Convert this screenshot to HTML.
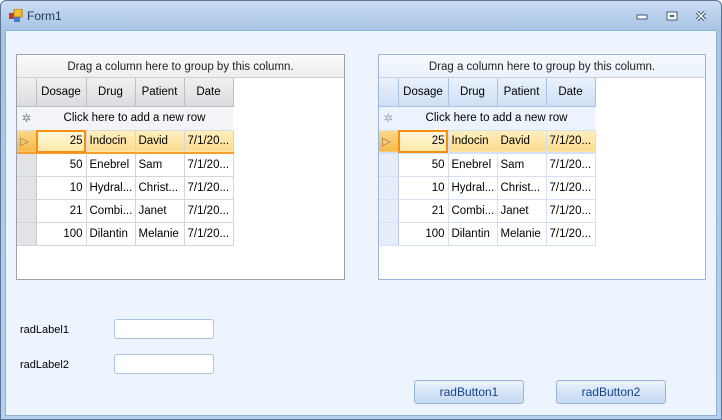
<!DOCTYPE html>
<html><head><style>
*{box-sizing:border-box;margin:0;padding:0}
body{width:722px;height:420px;overflow:hidden;font-family:"Liberation Sans",sans-serif;font-size:11.5px;color:#000;background:#fff}
.win{position:absolute;left:0;top:0;width:722px;height:420px;background:linear-gradient(#c9dcf2,#a8c3e4 30px,#b9d0ec);border:1px solid #5a7497;border-radius:6px 6px 0 0}
.title{position:absolute;left:26px;top:8px;color:#1e395b;font-size:12px}
.client{position:absolute;left:4px;top:29px;width:712px;height:386px;background:#edf4fd;border:1px solid #8fafd6}
.grid{position:absolute;top:54px;height:226px;background:#fff;border:1px solid #a0a0a8}
.grp{height:23px;text-align:center;line-height:24px;background:linear-gradient(#fafafa,#eeeeef);border-bottom:1px solid #d0d0d4;color:#222}
table{border-collapse:collapse;table-layout:fixed;width:216px}
td{border:1px solid #d5d5d8;height:23px;padding:0 3px;white-space:nowrap;overflow:hidden;border-top:none;border-left:none}
.hd td{height:28px;text-align:center;background:linear-gradient(#f0f0f2,#dcdce0);border-right:1px solid #c0c0c4;border-bottom:1px solid #c0c0c4}
.nr td{height:24px;background:#f3f4f8;text-align:center;border-right:none;border-bottom:1px solid #d8dae0}
.ind{background:#e2e3e7;border-right:1px solid #c8c8cc}
.sel td{background:linear-gradient(#ffefc0,#fcdc8e);border-bottom:2px solid #f7a030}
.sel td.cur{background:linear-gradient(#fff8e0,#ffe8a8);outline:2px solid #f78f10;outline-offset:-2px}
.r{text-align:right}
.b .hd td{background:linear-gradient(#eaf2fc,#cfdff3);border-color:#a9c3e3}
.b td{border-color:#d4e1f2}
.b .ind{background:#e6eef9;border-right-color:#b6cbe6}
.b .nr td{background:#ecf3fd}
.b .grp{background:linear-gradient(#f6f9fd,#eaf2fc)}
.b{border-color:#99b6da}
.lbl{position:absolute;left:20px;font-size:11px}
.tb{position:absolute;left:114px;width:100px;height:20px;background:#fff;border:1px solid #a9c3e3;border-radius:3px}
.btn{position:absolute;top:380px;width:110px;height:24px;border:1px solid #98b4d8;border-radius:3px;background:linear-gradient(#ecf3fc,#d6e5f7 50%,#c6daf3);text-align:center;line-height:22px;color:#15428b;font-size:12px}
</style></head><body>
<div class="win">
<svg style="position:absolute;left:8px;top:8px" width="14" height="14"><rect x="0" y="4" width="6" height="6" fill="#c03a2a"/><rect x="5" y="0" width="8" height="8" fill="#f5c030" stroke="#b08010"/><rect x="5" y="8" width="6" height="5" fill="#4a7ad0"/></svg>
<div class="title">Form1</div>
<svg style="position:absolute;left:634px;top:10px" width="80" height="12"><rect x="2" y="4" width="10" height="4" fill="#fff" stroke="#3b5a82"/><rect x="32" y="1" width="10" height="8" fill="#fff" stroke="#3b5a82"/><rect x="35" y="4" width="4" height="2" fill="#3b5a82"/><path d="M62 1l8 8M70 1l-8 8" stroke="#3b5a82" stroke-width="3.5"/><path d="M62 1l8 8M70 1l-8 8" stroke="#fff" stroke-width="1.5"/></svg>
<div class="client"></div>
</div>

<div class="grid" style="left:16px;width:329px">
<div class="grp">Drag a column here to group by this column.</div>
<table>
<colgroup><col style="width:19px"><col style="width:50px"><col style="width:49px"><col style="width:49px"><col style="width:49px"></colgroup>
<tr class="hd"><td></td><td>Dosage</td><td>Drug</td><td>Patient</td><td>Date</td></tr>
<tr class="nr"><td style="color:#888">✲</td><td colspan="4">Click here to add a new row</td></tr>
<tr class="sel"><td style="background:linear-gradient(#fcd98a,#f7b84a);color:#876">▷</td><td class="r cur">25</td><td>Indocin</td><td>David</td><td>7/1/20...</td></tr>
<tr><td class="ind"></td><td class="r">50</td><td>Enebrel</td><td>Sam</td><td>7/1/20...</td></tr>
<tr><td class="ind"></td><td class="r">10</td><td>Hydral...</td><td>Christ...</td><td>7/1/20...</td></tr>
<tr><td class="ind"></td><td class="r">21</td><td>Combi...</td><td>Janet</td><td>7/1/20...</td></tr>
<tr><td class="ind"></td><td class="r">100</td><td>Dilantin</td><td>Melanie</td><td>7/1/20...</td></tr>
</table></div>

<div class="grid b" style="left:378px;width:328px">
<div class="grp">Drag a column here to group by this column.</div>
<table>
<colgroup><col style="width:19px"><col style="width:50px"><col style="width:49px"><col style="width:49px"><col style="width:49px"></colgroup>
<tr class="hd"><td></td><td>Dosage</td><td>Drug</td><td>Patient</td><td>Date</td></tr>
<tr class="nr"><td style="color:#9ab">✲</td><td colspan="4">Click here to add a new row</td></tr>
<tr class="sel"><td style="background:linear-gradient(#fcd98a,#f7b84a);color:#876">▷</td><td class="r cur">25</td><td>Indocin</td><td>David</td><td>7/1/20...</td></tr>
<tr><td class="ind"></td><td class="r">50</td><td>Enebrel</td><td>Sam</td><td>7/1/20...</td></tr>
<tr><td class="ind"></td><td class="r">10</td><td>Hydral...</td><td>Christ...</td><td>7/1/20...</td></tr>
<tr><td class="ind"></td><td class="r">21</td><td>Combi...</td><td>Janet</td><td>7/1/20...</td></tr>
<tr><td class="ind"></td><td class="r">100</td><td>Dilantin</td><td>Melanie</td><td>7/1/20...</td></tr>
</table></div>

<div class="lbl" style="top:324px">radLabel1</div>
<div class="lbl" style="top:359px">radLabel2</div>
<div class="tb" style="top:319px"></div>
<div class="tb" style="top:354px"></div>
<div class="btn" style="left:414px">radButton1</div>
<div class="btn" style="left:556px">radButton2</div>
</body></html>
